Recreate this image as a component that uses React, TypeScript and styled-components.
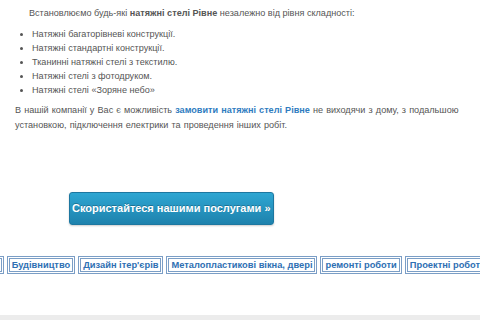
import React from "react";
import styled, { createGlobalStyle } from "styled-components";

const GlobalStyle = createGlobalStyle`
  html, body {
    margin: 0;
    padding: 0;
    background: #fff;
  }
  body {
    font-family: "Liberation Sans", Arial, sans-serif;
    width: 480px;
    height: 320px;
    overflow: hidden;
  }
`;

const Page = styled.div`
  width: 480px;
  height: 320px;
  display: flex;
  flex-direction: column;
  overflow: hidden;
`;

const Content = styled.section`
  padding: 6px 15px 0 15px;
  color: #555;
  font-size: 9.1px;
  line-height: 15px;
  flex: 1;
`;

const Lead = styled.p`
  margin: 0;
  text-indent: 14px;
`;

const List = styled.ul`
  margin: 6px 0 6px 0;
  padding-left: 17px;
  line-height: 14px;
`;

const Para = styled.p`
  margin: 0;
  word-spacing: 0.6px;
`;

const Link = styled.a`
  color: #2f7cbf;
  font-weight: bold;
  text-decoration: none;
`;

const ButtonWrap = styled.div`
  padding: 59px 0 0 54px;
`;

const CtaButton = styled.a`
  display: inline-block;
  padding: 0 2px;
  height: 31px;
  line-height: 31px;
  font-size: 11px;
  font-weight: bold;
  color: #fff;
  text-shadow: 0 -1px 0 rgba(0, 0, 0, 0.25);
  background: linear-gradient(#2ea6d2, #1e82ad);
  border: 1px solid #1d77a0;
  border-radius: 3px;
  box-shadow: 0 1px 2px rgba(0, 0, 0, 0.2);
  text-decoration: none;
`;

const TagStrip = styled.div`
  display: flex;
  gap: 3px;
  margin: 31px 0 0 -84px;
  white-space: nowrap;
`;

const Tag = styled.a`
  display: inline-block;
  height: 12px;
  line-height: 12px;
  padding: 0 2px;
  font-size: 9.3px;
  font-weight: bold;
  color: #2e6fb3;
  border: 3px double #7b9ec6;
  text-decoration: none;
`;

const Footer = styled.div`
  height: 5px;
  background: #ececec;
  flex-shrink: 0;
`;

const tags = [
  "Натяжні стелі",
  "Будівництво",
  "Дизайн ітер'єрів",
  "Металопластикові вікна, двері",
  "ремонті роботи",
  "Проектні роботи",
];

export default function App() {
  return (
    <>
      <GlobalStyle />
      <Page>
        <Content>
          <Lead>
            Встановлюємо будь-які <b>натяжні стелі Рівне</b> незалежно від рівня
            складності:
          </Lead>
          <List>
            <li>Натяжні багаторівневі конструкції.</li>
            <li>Натяжні стандартні конструкції.</li>
            <li>Тканинні натяжні стелі з текстилю.</li>
            <li>Натяжні стелі з фотодруком.</li>
            <li>Натяжні стелі «Зоряне небо»</li>
          </List>
          <Para>
            В нашій компанії у Вас є можливість{" "}
            <Link href="#">замовити натяжні стелі Рівне</Link> не виходячи з
            дому, з подальшою установкою, підключення електрики та проведення
            інших робіт.
          </Para>
          <ButtonWrap>
            <CtaButton href="#">Скористайтеся нашими послугами »</CtaButton>
          </ButtonWrap>
          <TagStrip>
            {tags.map((t) => (
              <Tag key={t} href="#">
                {t}
              </Tag>
            ))}
          </TagStrip>
        </Content>
        <Footer />
      </Page>
    </>
  );
}
